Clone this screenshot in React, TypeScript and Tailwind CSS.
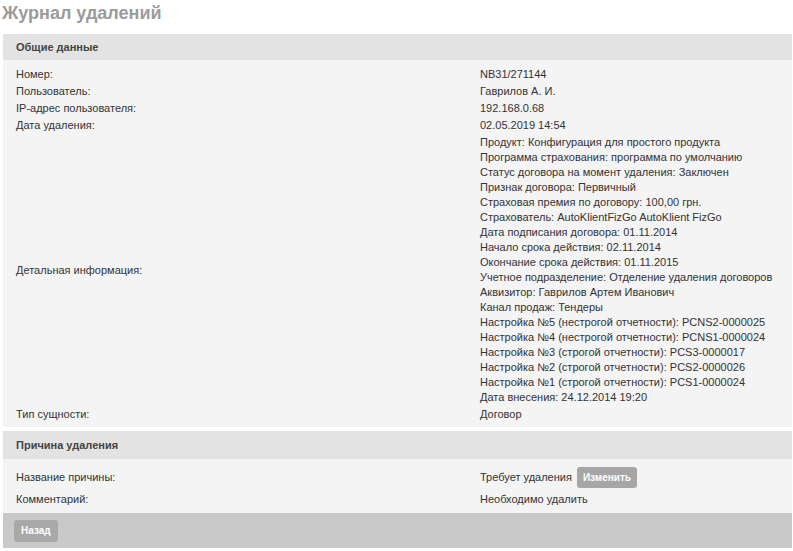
import React from "react";

const details = [
  "Продукт: Конфигурация для простого продукта",
  "Программа страхования: программа по умолчанию",
  "Статус договора на момент удаления: Заключен",
  "Признак договора: Первичный",
  "Страховая премия по договору: 100,00 грн.",
  "Страхователь: AutoKlientFizGo AutoKlient FizGo",
  "Дата подписания договора: 01.11.2014",
  "Начало срока действия: 02.11.2014",
  "Окончание срока действия: 01.11.2015",
  "Учетное подразделение: Отделение удаления договоров",
  "Аквизитор: Гаврилов Артем Иванович",
  "Канал продаж: Тендеры",
  "Настройка №5 (нестрогой отчетности): PCNS2-0000025",
  "Настройка №4 (нестрогой отчетности): PCNS1-0000024",
  "Настройка №3 (строгой отчетности): PCS3-0000017",
  "Настройка №2 (строгой отчетности): PCS2-0000026",
  "Настройка №1 (строгой отчетности): PCS1-0000024",
  "Дата внесения: 24.12.2014 19:20",
];

function Row({ label, children }: { label: string; children: React.ReactNode }) {
  return (
    <div className="flex items-center py-px">
      <div className="w-[464px] shrink-0">{label}</div>
      <div className="flex-1">{children}</div>
    </div>
  );
}

export default function App() {
  return (
    <div
      className="bg-white min-h-[551px] text-[11px] leading-[15px] text-[#333333]"
      style={{ fontFamily: '"Liberation Sans", Arial, sans-serif' }}
    >
      <h1 className="pl-[2px] pt-[2px] h-[34px] text-[18px] leading-[22px] font-bold text-[#9b9b9b]">
        Журнал удалений
      </h1>
      <div className="ml-[3px] mr-px">
        <div className="h-[26px] bg-[#e3e3e3] pl-[13px] flex items-center font-bold text-[11px] text-[#444444]">
          Общие данные
        </div>
        <div className="bg-[#f4f4f4] pl-[13px] pt-[6px] pb-[4px]">
          <Row label="Номер:">NB31/271144</Row>
          <Row label="Пользователь:">Гаврилов А. И.</Row>
          <Row label="IP-адрес пользователя:">192.168.0.68</Row>
          <Row label="Дата удаления:">02.05.2019 14:54</Row>
          <Row label="Детальная информация:">
            {details.map((d) => (
              <div key={d}>{d}</div>
            ))}
          </Row>
          <Row label="Тип сущности:">Договор</Row>
        </div>
        <div className="h-[4px]" />
        <div className="h-[28px] bg-[#e3e3e3] pl-[13px] flex items-center font-bold text-[11px] text-[#444444]">
          Причина удаления
        </div>
        <div className="bg-[#f4f4f4] pl-[13px] pt-[6px] pb-[5px]">
          <div className="flex items-center h-[25px]">
            <div className="w-[464px] shrink-0">Название причины:</div>
            <div className="flex items-center gap-[5px]">
              <span>Требует удаления</span>
              <button className="h-[21px] px-[6px] rounded-[3px] bg-[#a6a6a6] text-white font-bold text-[10px]">
                Изменить
              </button>
            </div>
          </div>
          <div className="flex items-center h-[18px]">
            <div className="w-[464px] shrink-0">Комментарий:</div>
            <div>Необходимо удалить</div>
          </div>
        </div>
        <div className="h-[35px] bg-[#c9c9c9] pl-[11px] flex items-center">
          <button className="h-[22px] px-[7px] rounded-[3px] bg-[#a8a8a8] text-white font-bold text-[10px]">
            Назад
          </button>
        </div>
      </div>
    </div>
  );
}
